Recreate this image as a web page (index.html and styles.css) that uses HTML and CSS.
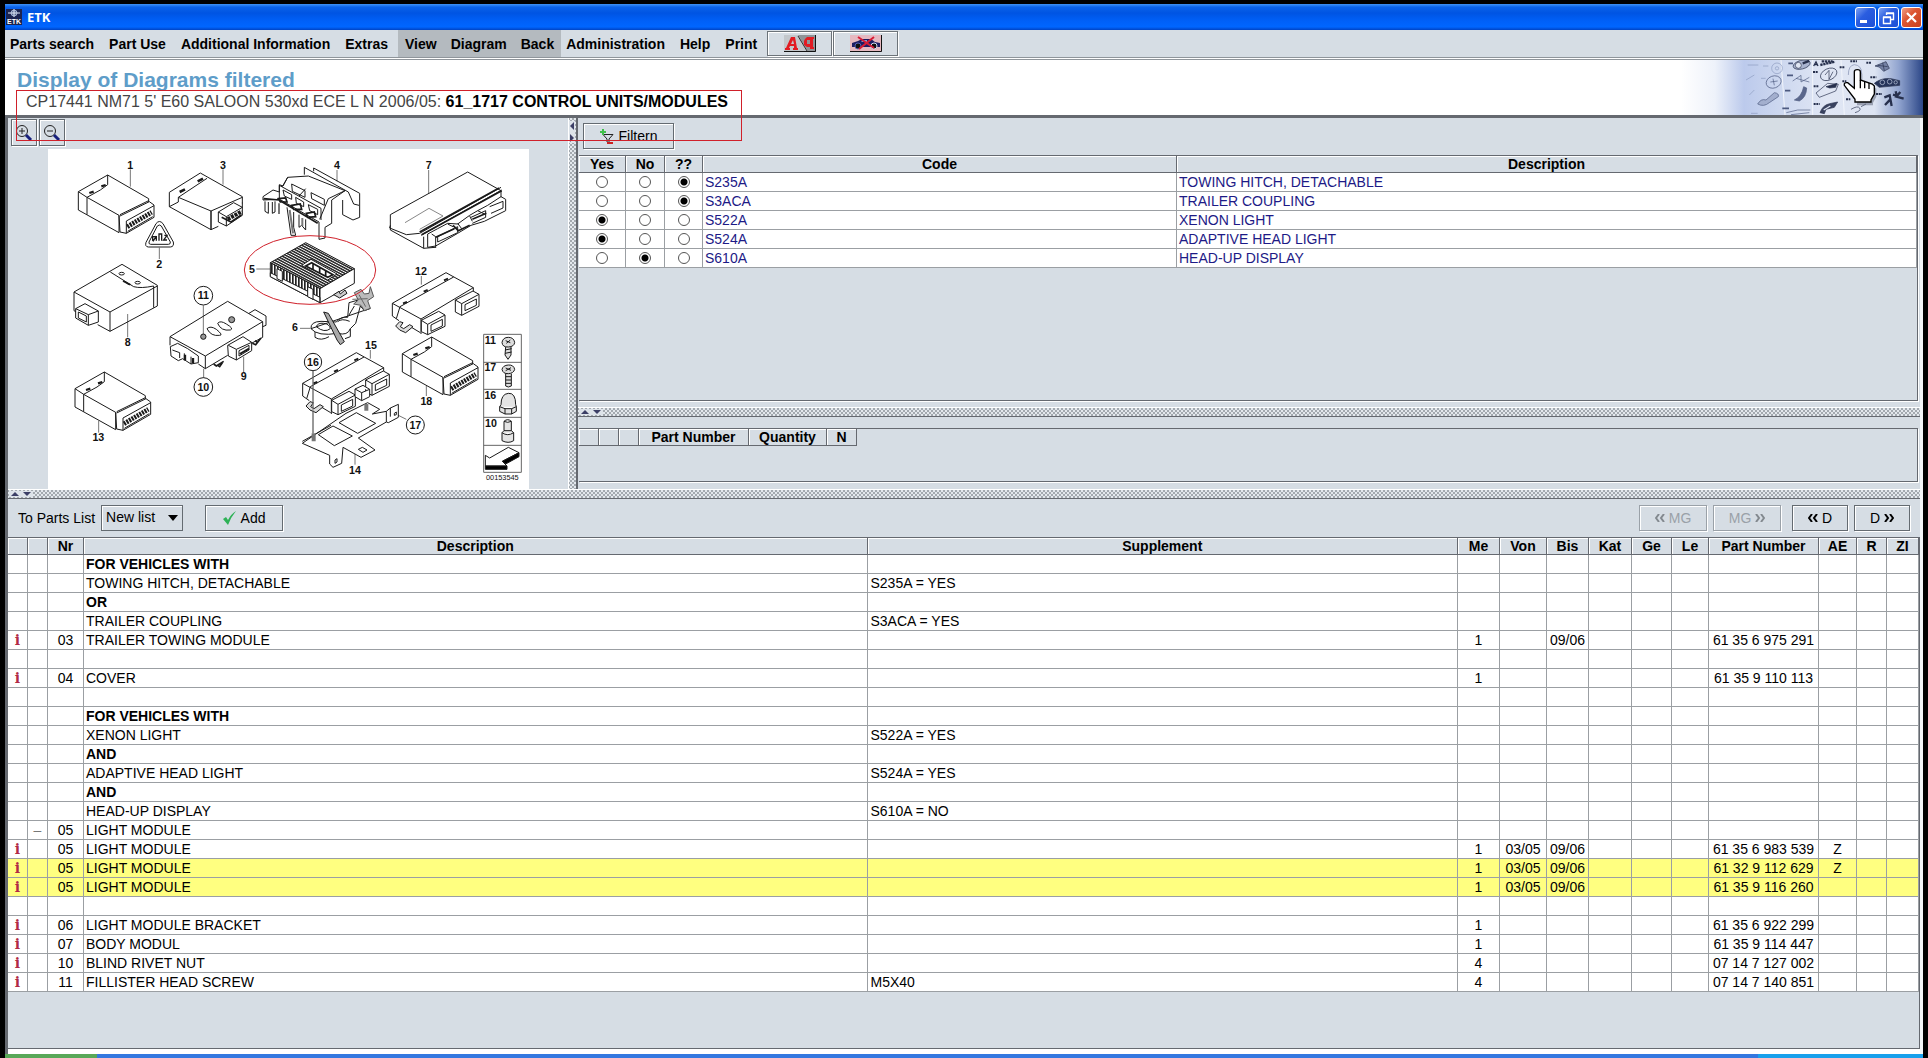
FILE: index.html
```html
<!DOCTYPE html>
<html lang="en">
<head>
<meta charset="utf-8">
<title>ETK</title>
<link rel="stylesheet" href="styles.css">
</head>
<body>
<div class="window">
  <div class="titlebar">
    <svg class="app-icon" width="16" height="16" viewBox="0 0 16 16" aria-hidden="true">
      <rect width="16" height="16" fill="#1c2550"/>
      <circle cx="8" cy="4" r="3" fill="#5c6c92" stroke="#9fb0cf"/>
      <path d="M2 4H14M8 0V8" stroke="#dfe7f5"/>
      <text x="8" y="15" font-size="7" font-weight="bold" text-anchor="middle" fill="#fff">ETK</text>
    </svg>
    <span class="app-name">ETK</span>
    <div class="window-buttons">
      <button type="button" class="wbtn" aria-label="Minimize"><svg width="19" height="19" viewBox="0 0 19 19"><path d="M4 13.5H11" stroke="#fff" stroke-width="3"/></svg></button>
      <button type="button" class="wbtn" aria-label="Restore"><svg width="19" height="19" viewBox="0 0 19 19"><path d="M7.500 7V5.500H14.500V11.500H12M7 5H15M4.500 9.500H11.500V15.500H4.500ZM4 9H12" fill="none" stroke="#fff" stroke-width="1.400"/></svg></button>
      <button type="button" class="wbtn close" aria-label="Close"><svg width="19" height="19" viewBox="0 0 19 19"><path d="M5 5L14 14M14 5L5 14" stroke="#fff" stroke-width="2.200"/></svg></button>
    </div>
  </div>

  <nav class="menubar">
    <button type="button">Parts search</button><button type="button">Part Use</button><button type="button">Additional Information</button><button type="button">Extras</button>
    <div class="menu-group"><button type="button">View</button><button type="button">Diagram</button><button type="button">Back</button></div>
    <button type="button">Administration</button><button type="button">Help</button><button type="button">Print</button>
    <div class="tool-buttons">
      <button type="button" class="tool" aria-label="Letter case"><svg width="32" height="17" viewBox="0 0 32 17"><path d="M0 0H32V17H0Z" fill="#c3c7cb"/><path d="M14 0H32V17H24Z" fill="#8f9498"/><path d="M31.500 0V16.500H0" fill="none" stroke="#111"/><path d="M14 1L23 16" stroke="#333"/><path d="M1 15V13H2L7 2H11L13 13H14V15H9V13H10V11H6L5 13H6V15ZM9 5L7 9H10Z" fill="#e21b22" fill-rule="evenodd"/><path d="M21 4L23 2H30V4H29V12H30V14H26V12H23L20 10V6ZM23 5V9H26V5Z" fill="#e21b22" fill-rule="evenodd"/></svg></button>
      <button type="button" class="tool" aria-label="Vehicle off"><svg width="32" height="17" viewBox="0 0 32 17"><rect width="32" height="17" fill="#e6b9c0"/><path d="M31.500 0V16.500H0" fill="none" stroke="#111"/><path d="M2 8L8 6L12 4H21L25 7L30 8V12H2Z" fill="#1d1d63"/><path d="M13 5H17V7H11Z" fill="#7fa3d8"/><circle cx="8" cy="11" r="3" fill="#111" stroke="#5361b5"/><circle cx="24" cy="11" r="3" fill="#111" stroke="#d5d8ee"/><path d="M8 2L24 13M24 2L9 14" stroke="#d71c35" stroke-width="2"/></svg></button>
    </div>
  </nav>

  <header class="banner">
    <div>
      <h1>Display of Diagrams filtered</h1>
      <p>CP17441 NM71 5' E60 SALOON 530xd ECE L N 2006/05: <b>61_1717 CONTROL UNITS/MODULES</b></p>
    </div>
    <svg class="banner-art" width="242" height="55" viewBox="360 180 726 165" preserveAspectRatio="none" aria-hidden="true">
      <defs><linearGradient id="sky"><stop offset="0" stop-color="#fff"/><stop offset=".14" stop-color="#eef2fa"/><stop offset=".26" stop-color="#bccaec"/><stop offset=".4" stop-color="#ccd7ef"/><stop offset=".6" stop-color="#e0e6f4"/><stop offset=".8" stop-color="#dde4f2"/><stop offset=".9" stop-color="#91a4cf"/><stop offset="1" stop-color="#2b4687"/></linearGradient></defs>
      <rect x="360" y="180" width="726" height="165" fill="url(#sky)"/>
      <path d="M660 180L672 345M755 180V345M840 180L850 345" stroke="#f2f5fb" stroke-width="3"/>
      <g fill="none" stroke="#8d9cc0" stroke-width="2">
        <circle cx="648" cy="205" r="16"/><circle cx="648" cy="205" r="5"/>
        <path d="M560 195H592M565 285L580 270M606 198H622M600 235H614M570 340H590M555 240L580 225"/>
      </g>
      <g fill="none" stroke="#4d5a80" stroke-width="2">
        <ellipse cx="638" cy="246" rx="23" ry="18" transform="rotate(-20 638 246)"/><path d="M628 246L650 243M636 236L640 256"/>
        <path d="M590 312Q600 295 615 300L640 278Q655 280 652 290L625 308Q608 322 590 312Z" fill="#a3afce"/>
        <path d="M695 243L720 226V246L745 232M705 235L745 246M676 338L710 330H748M690 344L745 338"/>
        <path d="M664 325H684M672 272H688M678 226H696M682 190H696" stroke-width="5"/>
        <path d="M700 300Q722 290 728 260L737 264Q736 292 715 303Z" fill="#5a678c"/>
      </g>
      <g fill="none" stroke="#27304d" stroke-width="2">
        <ellipse cx="722" cy="194" rx="26" ry="13" transform="rotate(-14 722 194)" fill="#a9b4d0"/><circle cx="712" cy="196" r="9" fill="#e0e6f3"/><path d="M725 190L745 183" stroke-width="7"/>
        <path d="M758 198L765 186L771 198M762 194H770" stroke-width="4"/><path d="M778 195L822 185M782 184H815" stroke-width="7" stroke-dasharray="7 2"/>
        <ellipse cx="803" cy="223" rx="26" ry="17" transform="rotate(-25 803 223)"/><path d="M792 225L804 211V238L816 215"/>
        <path d="M765 279L800 250L832 253L824 273L775 292Z"/><path d="M795 260L828 250L824 262L806 264Z" fill="#27304d"/>
        <path d="M777 338Q785 315 806 311L830 306L820 322L795 328L790 341Z" fill="#39425f"/><path d="M788 330L808 318" stroke="#dbe2f2" stroke-width="4"/>
        <path d="M756 216H770M758 259H774M758 312H776M836 202H852M928 232H946M916 188H932M945 282H963M855 298H868M868 184H888M844 244H856" stroke-width="6" stroke-dasharray="6 2"/>
        <path d="M862 225Q862 196 880 194Q902 196 902 220" stroke="#7f8bad"/><path d="M870 328Q890 316 896 324T882 338M900 320L915 312"/>
        <path d="M942 198L975 185L985 205L968 214L955 201Z" fill="#7582a5"/><path d="M950 196L980 200M965 188L970 212"/>
        <path d="M940 250Q960 233 990 236L1016 242V256L955 262Z" fill="#26345a"/><circle cx="964" cy="247" r="7" stroke="#c9d1e6"/><circle cx="986" cy="245" r="7" stroke="#c9d1e6"/><circle cx="1004" cy="247" r="5" stroke="#c9d1e6"/>
        <path d="M970 292L986 286L992 318M972 315L988 298M996 284L1010 288M1018 276L1006 290L1028 296M1004 274L1008 290" stroke-width="7"/>
      </g>
      <path d="M880 215Q880 209 889 209T898 215V240L934 252L940 258V282L930 300V308H882V300L848 256Q846 246 858 246L880 263Z" fill="#555b70" opacity=".5" transform="translate(6 8)"/>
      <path d="M880 215Q880 209 889 209T898 215V240L934 252L940 258V282L930 300V306H882V298L850 256Q848 246 860 248L880 265Z" fill="#fff" stroke="#000" stroke-width="4"/>
      <path d="M898 240V265M911 245V265M924 249V267" stroke="#000" stroke-width="4"/>
    </svg>
    <div class="mark-box"></div>
  </header>

  <main class="content">
    <section class="upper">
      <div class="diagram-pane">
        <div class="zoom-bar">
          <button type="button" class="raised zoom" aria-label="Zoom in"><svg width="18" height="18" viewBox="0 0 18 18"><circle cx="7" cy="7" r="5.500" fill="none" stroke="#222"/><path d="M4 7H10M7 4V10" stroke="#222"/><path d="M11 11L16 16" stroke="#17207c" stroke-width="3"/></svg></button>
          <button type="button" class="raised zoom" aria-label="Zoom out"><svg width="18" height="18" viewBox="0 0 18 18"><circle cx="7" cy="7" r="5.500" fill="none" stroke="#222"/><path d="M4 7H10" stroke="#222"/><path d="M11 11L16 16" stroke="#17207c" stroke-width="3"/></svg></button>
        </div>
        <svg class="diagram" width="481" height="340" viewBox="0 0 1443 1020" role="img" aria-label="Control units diagram">
          <rect width="1443" height="1020" fill="#fff"/>
          <defs>
            <pattern id="ribs" width="12" height="8" patternUnits="userSpaceOnUse" patternTransform="skewY(28)"><rect width="12" height="8" fill="#fff"/><rect width="12" height="5" fill="#222"/></pattern>
            <pattern id="fins" width="9" height="12" patternUnits="userSpaceOnUse"><rect width="9" height="12" fill="#fff"/><rect width="5" height="12" fill="#222"/></pattern>
            <g id="unit">
              <path d="M232 245L320 195L443 266V276M232 245V300L354 368V316L258 262L232 245M258 262V314M320 195V224L298 240L258 262M357 314L443 272M354 316L357 366L376 370L459 322V285L445 275L357 318M376 333V370M376 333L459 287"/>
              <path d="M379 350L452 307" stroke-width="14" stroke-dasharray="6 3"/>
              <path d="M380 364L455 320"/>
              <path d="M265 249L278 245M301 229L314 225" stroke-width="7"/>
            </g>
            <g id="wide">
              <path d="M364 490L525 398L607 443V456M364 490L450 537L607 443M364 490V528L384 542M418 560L448 578M450 537V582M387 500L548 411M387 500L376 536"/>
              <path d="M396 490L408 486M458 455L470 450M519 421L531 416" stroke-width="6"/>
              <path d="M451 541L503 514L522 525V559L470 584L451 575ZM451 541L470 553L522 525M470 553V584M480 555L514 538V558L480 574Z" fill="#fff"/>
              <path d="M553 480L606 453L624 463V499L572 526L553 516ZM553 480L572 491L624 463M572 491V526M582 494L616 477V496L582 512Z" fill="#fff"/>
              <path d="M374 558L386 545L396 548L388 560L398 566L416 554L426 560L404 578L386 570Z" fill="#ddd"/>
            </g>
          </defs>
          <g transform="translate(-141 -117)" class="line">
            <use href="#unit"/>
            <use href="#unit" transform="translate(-10 591)"/>
            <path class="lead" d="M388 178V230M666 178V224M475 413V447M380 612V682M607 586V676M608 776V806M728 740V786M293 930V968M766 477H808"/>
            <path d="M505 247L598 189L724 260V280M505 247V290L630 359V303L532 262M505 290L532 276V262L618 205M630 303L724 262M630 303V359L652 349M724 278V316L676 348L652 336M652 306L698 278L724 292L676 320L652 306V336M676 320V348"/>
            <path d="M662 322L690 336L722 314" stroke-width="5"/><path d="M680 328L722 304" stroke-width="12" stroke-dasharray="9 3"/><path d="M536 246L552 238M590 214L606 206" stroke-width="8"/>
            <path d="M465 341Q475 328 486 341L517 396Q520 410 508 411H442Q431 410 435 397ZM469 348Q475 342 481 348L508 396Q509 403 502 403H449Q442 402 444 396Z"/>
            <path d="M455 392V380H466V392M474 392V372H482V392M490 376H498L488 390H498M456 394L466 378" stroke-width="4"/>
            <path d="M219 546L363 463L469 526V588L327 664L290 644M219 546L327 606L469 528M327 606V664M219 546V602L226 606M328 486L398 530Q420 536 458 528V593M376 519L384 524"/>
            <path d="M224 596L252 581L292 603V636L262 646L224 624ZM224 596L262 614L292 603M262 614V646M232 606L256 618V636L232 624Z" fill="#fff"/>
            <ellipse cx="362" cy="491" rx="8" ry="4"/><ellipse cx="410" cy="518" rx="8" ry="4"/><path d="M366 513L388 524" stroke-width="5"/>
            <path d="M744 610L762 599L795 618V646L785 650"/>
            <path d="M507 680L680 574L785 635V682L740 706M507 680L613 738L785 635M613 738V776L592 762M507 680V706M680 736L613 776"/>
            <path d="M508 710L530 700L560 716L592 738V758L570 762L545 746L532 752L510 738ZM514 720L536 728V744M550 730V752M570 740V762" fill="#fff"/>
            <path d="M552 734V750M576 744V760" stroke-width="7"/>
            <path d="M680 706L726 680L752 697V722L706 750L682 738ZM682 706L706 718L752 697M706 718V750M714 722L744 706V720L714 738Z" fill="#fff"/>
            <path d="M716 732L744 716" stroke-width="6"/>
            <path d="M638 762L646 768L668 754M650 766L656 770L664 758M754 700L764 704L780 684M762 692L770 698" stroke-width="5"/>
            <path d="M618 656Q628 646 646 658Q668 676 656 676Q630 680 618 656ZM650 640Q658 630 676 642Q700 656 688 660Q660 664 650 640Z"/>
            <circle cx="607" cy="680" r="8" fill="#999"/><circle cx="692" cy="629" r="9" fill="#999"/>
            <circle cx="607" cy="557" r="28" fill="#fff"/><circle cx="607" cy="831" r="28" fill="#fff"/>
            <g class="num">
              <text x="388" y="176">1</text><text x="666" y="176">3</text><text x="475" y="474">2</text><text x="753" y="488">5</text><text x="380" y="709">8</text><text x="728" y="809">9</text><text x="607" y="568">11</text><text x="607" y="842">10</text><text x="292" y="994">13</text>
            </g>
          </g>
          <g transform="translate(669 -27)" class="line">
            <path class="lead" d="M198 90V124M473 90V162M451 408V434M298 630V656M466 738V768M252 942V974M87 565H118M126 690V880M382 826L406 838"/>
            <!-- bracket 4 -->
            <path d="M128 84L266 160V232L246 240L215 224V180M100 82V104M100 82L232 156L248 192L264 196M128 84V94"/>
            <path d="M50 112L112 108L222 152L182 180V250L162 262V294L144 298V246L26 178L-24 180V170L6 150L25 156V134L36 138Z" fill="#fff"/>
            <path d="M25 136L150 205V240M25 136V176M50 112L34 140M104 146L84 168M222 152L172 176L146 238M62 132L102 152V172L64 154ZM120 158L160 178V196L122 176ZM36 150L62 164V178L40 168ZM74 172L98 186V200L76 190ZM112 194L140 208V224L116 212Z"/>
            <path d="M48 202L60 286H74L68 262V216M84 224V262L92 256L104 270V238M-18 184V214L-8 220V186M4 186V220L12 216V184"/>
            <path d="M22 176L44 174L48 186L28 186ZM62 196L88 192L92 208L68 208ZM106 220L130 216L134 230L110 232ZM-22 176L24 180L140 250" stroke-width="5"/>
            <path d="M56 210L66 280M94 234V258M24 190V222" stroke-width="6" stroke="#777"/>
            <!-- module 5 -->
            <path d="M104 308L250 386L147 446L-2 368Z" fill="url(#ribs)"/>
            <path d="M-2 368L147 446V488L-2 410Z" fill="url(#fins)"/>
            <path d="M147 446L250 386V430L147 488ZM-2 398V410L147 488V472Z" fill="#fff"/>
            <path d="M92 376L120 358L198 402L170 420Z" fill="#fff"/><path d="M104 378L122 368L186 404L170 412ZM126 370V388M146 380V400M164 392V410" stroke-width="5"/>
            <path d="M18 386L34 394V424L18 416ZM110 440L126 448V478L110 470Z" fill="#fff"/>
            <path d="M188 464L204 454L208 462L222 450L228 460L206 474Z" fill="#ccc"/>
            <!-- holder 6 -->
            <path d="M120 566Q118 545 150 544L196 546Q210 528 230 532L234 488L262 480M298 505L280 512L268 498L254 550L238 566Q230 588 200 580Q140 590 120 566ZM132 576V592Q150 604 174 590M238 566V590L222 596M136 560Q140 548 158 550T178 566Q160 580 136 560M200 545Q212 534 236 544M234 525L250 498"/>
            <path d="M158 516L172 520L220 605L208 614L198 600Z" fill="#aaa"/>
            <path d="M250 458L270 448L280 462L294 460L298 440L308 470L290 482L298 505L280 512L270 496L248 492L262 480Z" fill="#bbb" stroke="#555"/><path d="M264 464L284 500M244 478L290 476" stroke="#666"/>
            <!-- module 7 -->
            <path d="M358 224L590 96L690 152V172M358 224V270L458 325L492 322M358 256L356 264L406 284L446 280M446 280L690 142M450 286L692 150M458 290V325"/><path d="M402 248L474 205L516 228L446 268" stroke="#888"/>
            <path d="M446 276L684 144M452 284L692 152" stroke-width="5"/>
            <path d="M470 282L500 266L530 250L560 252L596 226L620 212L650 196L690 170L704 178V212L640 244L600 256L560 280L494 318L470 322Z" fill="#fff"/>
            <path d="M482 282L494 290V324M500 290L560 260V278L500 306ZM600 232L644 212V232L604 250M656 200L696 184V204L660 220M530 252L546 260M560 250L572 266M596 228L604 244M620 212L640 222"/>
            <path d="M494 292L550 266M546 256L562 272L596 256M604 238L646 220" stroke-width="5"/>
            <use href="#wide"/>
            <use href="#unit" transform="translate(162 396)"/>
            <!-- mounting plate 14 -->
            <path d="M94 904L180 856M225 820L290 788L326 808L304 822L346 814L358 804L382 793V832L352 848L346 846L262 894L312 930L270 952L216 922L212 970L186 982L176 972V946L94 910ZM346 814V846M358 804V830"/>
            <path d="M142 884L186 858L244 888L190 917ZM204 848L256 818L314 850L260 880ZM262 928L274 922L288 930L276 937ZM192 960L198 956V966L192 970ZM370 820L376 816V824L370 826Z"/>
            <path d="M128 880V904M286 792V812" stroke-width="12" stroke="#777"/>
            <use href="#wide" transform="translate(-269 240)"/>
            <path d="M252 747L276 736L296 748V770L272 782L252 770ZM252 747L272 758L296 748M272 758V782" fill="#fff"/>
            <!-- hardware column -->
            <path stroke="#666" d="M638 583H751V997H638ZM638 667H751M638 748H751M638 832H751M638 916H751"/>
            <path d="M693 607Q696 592 712 592T731 607Q730 620 712 621T693 607ZM704 621L702 645L711 658L720 645V621M702 630L722 626M702 640L722 636M704 602L718 608M718 600L706 610" fill="#ddd"/>
            <path d="M693 688Q696 676 712 675T731 688Q728 700 712 701T693 688ZM704 701V738L712 741L721 738V701M704 710H720M704 720H720M704 730H720M704 684L720 691M720 683L704 692" fill="#ddd"/>
            <path d="M690 794Q690 762 712 760T734 794L736 800V814L722 822H702L686 814V800ZM686 800L702 806H722L736 800M702 806V822M722 806V822" fill="#e4e4e4"/>
            <path d="M699 844Q710 834 721 844V872L728 878V902Q712 912 693 902V878L699 872ZM699 844Q710 850 721 844M693 878Q710 890 728 878M699 872H721" fill="#e4e4e4"/>
            <path d="M643 946L656 954L712 922L744 938L694 964L708 978H643Z" fill="#fff"/><path d="M643 978H708V988H643ZM694 964L744 938V950L704 972Z" fill="#000"/>
            <circle cx="126" cy="666" r="26" fill="#fff"/><circle cx="433" cy="855" r="27" fill="#fff"/>
            <path class="lead" d="M126 692V880"/>
            <g class="num">
              <text x="198" y="87">4</text><text x="473" y="87">7</text><text x="450" y="404">12</text><text x="72" y="574">6</text><text x="300" y="627">15</text><text x="126" y="677">16</text><text x="466" y="796">18</text><text x="433" y="867">17</text><text x="252" y="1002">14</text>
              <text x="658" y="612">11</text><text x="658" y="693">17</text><text x="658" y="777">16</text><text x="660" y="861">10</text>
            </g>
            <text class="code" x="694" y="1019">00153545</text>
            <ellipse class="mark" cx="117" cy="390" rx="197" ry="103"/>
          </g>
        </svg>
      </div>

      <div class="splitter vertical"><svg width="6" height="22" viewBox="0 0 6 22" aria-hidden="true"><path d="M5 1V9L1 5ZM1 13V21L5 17Z" fill="#3c3f66"/></svg></div>

      <div class="filter-pane">
        <div class="filter-top">
          <button type="button" class="raised filter"><svg width="14" height="15" viewBox="0 0 14 15" aria-hidden="true"><path d="M3 5.500H13L9 10V14L7 13V10Z" fill="none" stroke="#222"/><path d="M3 0V6M0 3H6" stroke="#3fc04a" stroke-width="2"/><path d="M7 14H13" stroke="#c22" stroke-width="2"/></svg>Filtern</button>
          <div class="scroll-box">
            <table class="grid codes">
              <colgroup><col class="w47"><col class="w39"><col class="w38"><col class="w474"><col></colgroup>
              <thead><tr><th>Yes<th>No<th>??<th>Code<th>Description</tr></thead>
              <tbody>
                <tr><td><input type="radio" name="s235a" aria-label="S235A yes"><td><input type="radio" name="s235a" aria-label="S235A no"><td><input type="radio" name="s235a" aria-label="S235A unknown" checked><td>S235A<td>TOWING HITCH, DETACHABLE</tr>
                <tr><td><input type="radio" name="s3aca" aria-label="S3ACA yes"><td><input type="radio" name="s3aca" aria-label="S3ACA no"><td><input type="radio" name="s3aca" aria-label="S3ACA unknown" checked><td>S3ACA<td>TRAILER COUPLING</tr>
                <tr><td><input type="radio" name="s522a" aria-label="S522A yes" checked><td><input type="radio" name="s522a" aria-label="S522A no"><td><input type="radio" name="s522a" aria-label="S522A unknown"><td>S522A<td>XENON LIGHT</tr>
                <tr><td><input type="radio" name="s524a" aria-label="S524A yes" checked><td><input type="radio" name="s524a" aria-label="S524A no"><td><input type="radio" name="s524a" aria-label="S524A unknown"><td>S524A<td>ADAPTIVE HEAD LIGHT</tr>
                <tr><td><input type="radio" name="s610a" aria-label="S610A yes"><td><input type="radio" name="s610a" aria-label="S610A no" checked><td><input type="radio" name="s610a" aria-label="S610A unknown"><td>S610A<td>HEAD-UP DISPLAY</tr>
              </tbody>
            </table>
          </div>
        </div>
        <div class="splitter"><svg width="22" height="6" viewBox="0 0 22 6" aria-hidden="true"><path d="M1 5H9L5 1ZM13 1H21L17 5Z" fill="#3c3f66"/></svg></div>
        <div class="parts-small">
          <div class="scroll-box">
            <table class="grid small-table">
              <colgroup><col class="w20"><col class="w20"><col class="w20"><col class="w110"><col class="w78"><col class="w30"></colgroup>
              <thead><tr><th><th><th><th>Part Number<th>Quantity<th>N</tr></thead>
            </table>
          </div>
        </div>
      </div>
    </section>

    <div class="splitter"><svg width="22" height="6" viewBox="0 0 22 6" aria-hidden="true"><path d="M1 5H9L5 1ZM13 1H21L17 5Z" fill="#3c3f66"/></svg></div>

    <section class="lower">
      <div class="list-bar">
        <label for="list">To Parts List</label>
        <div class="select-wrap"><select id="list"><option>New list</option></select><svg width="10" height="6" viewBox="0 0 10 6" aria-hidden="true"><path d="M0 0H10L5 6Z"/></svg></div>
        <button type="button" class="raised add"><svg width="14" height="14" viewBox="0 0 14 14" aria-hidden="true"><path d="M0 8L3 6L5 9Q8 3 13 0Q8 6 5 14Z" fill="#2fb257"/></svg>Add</button>
        <div class="pager">
          <button type="button" class="raised page group" disabled><svg width="10" height="8" viewBox="0 0 10 8" aria-hidden="true"><path d="M4 0L1 4L4 8M9 0L6 4L9 8"/></svg>MG</button>
          <button type="button" class="raised page group" disabled>MG<svg width="10" height="8" viewBox="0 0 10 8" aria-hidden="true"><path d="M1 0L4 4L1 8M6 0L9 4L6 8"/></svg></button>
          <button type="button" class="raised page first-d"><svg width="10" height="8" viewBox="0 0 10 8" aria-hidden="true"><path d="M4 0L1 4L4 8M9 0L6 4L9 8"/></svg>D</button>
          <button type="button" class="raised page">D<svg width="10" height="8" viewBox="0 0 10 8" aria-hidden="true"><path d="M1 0L4 4L1 8M6 0L9 4L6 8"/></svg></button>
        </div>
      </div>
      <div class="parts-area">
        <table class="grid parts">
          <colgroup><col class="w20"><col class="w20"><col class="w36"><col class="desc"><col><col class="w42"><col class="w47"><col class="w42"><col class="w43"><col class="w40"><col class="w37"><col class="w110"><col class="w38"><col class="w30"><col class="w32"></colgroup>
          <thead><tr><th><th><th>Nr<th>Description<th>Supplement<th>Me<th>Von<th>Bis<th>Kat<th>Ge<th>Le<th>Part Number<th>AE<th>R<th>ZI</tr></thead>
          <tbody>
            <tr><td><td><td><td><b>FOR VEHICLES WITH</b><td><td><td><td><td><td><td><td><td><td><td></tr>
            <tr><td><td><td><td>TOWING HITCH, DETACHABLE<td>S235A = YES<td><td><td><td><td><td><td><td><td><td></tr>
            <tr><td><td><td><td><b>OR</b><td><td><td><td><td><td><td><td><td><td><td></tr>
            <tr><td><td><td><td>TRAILER COUPLING<td>S3ACA = YES<td><td><td><td><td><td><td><td><td><td></tr>
            <tr><td><i>i</i><td><td>03<td>TRAILER TOWING MODULE<td><td>1<td><td>09/06<td><td><td><td>61 35 6 975 291<td><td><td></tr>
            <tr><td><td><td><td><td><td><td><td><td><td><td><td><td><td><td></tr>
            <tr><td><i>i</i><td><td>04<td>COVER<td><td>1<td><td><td><td><td><td>61 35 9 110 113<td><td><td></tr>
            <tr><td><td><td><td><td><td><td><td><td><td><td><td><td><td><td></tr>
            <tr><td><td><td><td><b>FOR VEHICLES WITH</b><td><td><td><td><td><td><td><td><td><td><td></tr>
            <tr><td><td><td><td>XENON LIGHT<td>S522A = YES<td><td><td><td><td><td><td><td><td><td></tr>
            <tr><td><td><td><td><b>AND</b><td><td><td><td><td><td><td><td><td><td><td></tr>
            <tr><td><td><td><td>ADAPTIVE HEAD LIGHT<td>S524A = YES<td><td><td><td><td><td><td><td><td><td></tr>
            <tr><td><td><td><td><b>AND</b><td><td><td><td><td><td><td><td><td><td><td></tr>
            <tr><td><td><td><td>HEAD-UP DISPLAY<td>S610A = NO<td><td><td><td><td><td><td><td><td><td></tr>
            <tr><td><td class="fold">–<td>05<td>LIGHT MODULE<td><td><td><td><td><td><td><td><td><td><td></tr>
            <tr><td><i>i</i><td><td>05<td>LIGHT MODULE<td><td>1<td>03/05<td>09/06<td><td><td><td>61 35 6 983 539<td>Z<td><td></tr>
            <tr class="hit"><td><i>i</i><td><td>05<td>LIGHT MODULE<td><td>1<td>03/05<td>09/06<td><td><td><td>61 32 9 112 629<td>Z<td><td></tr>
            <tr class="hit"><td><i>i</i><td><td>05<td>LIGHT MODULE<td><td>1<td>03/05<td>09/06<td><td><td><td>61 35 9 116 260<td><td><td></tr>
            <tr><td><td><td><td><td><td><td><td><td><td><td><td><td><td><td></tr>
            <tr><td><i>i</i><td><td>06<td>LIGHT MODULE BRACKET<td><td>1<td><td><td><td><td><td>61 35 6 922 299<td><td><td></tr>
            <tr><td><i>i</i><td><td>07<td>BODY MODUL<td><td>1<td><td><td><td><td><td>61 35 9 114 447<td><td><td></tr>
            <tr><td><i>i</i><td><td>10<td>BLIND RIVET NUT<td><td>4<td><td><td><td><td><td>07 14 7 127 002<td><td><td></tr>
            <tr><td><i>i</i><td><td>11<td>FILLISTER HEAD SCREW<td>M5X40<td>4<td><td><td><td><td><td>07 14 7 140 851<td><td><td></tr>
          </tbody>
        </table>
      </div>
    </section>
  </main>
</div>
<div class="taskbar"><span class="start"></span><span class="tray"></span></div>
</body>
</html>
```
FILE: styles.css
```css
* { box-sizing: border-box; }
body {
  margin: 0;
  min-height: 100vh;
  padding: 4px 5px 0;
  display: flex;
  flex-direction: column;
  background: #000;
  color: #000;
  font: 14px/18px "Liberation Sans", Arial, sans-serif;
}
button, select { font: inherit; color: inherit; margin: 0; padding: 0; border: 0; background: none; border-radius: 0; }
svg { display: block; flex: none; }

.window { flex: 1; display: flex; flex-direction: column; background: #d6dde4; }

.titlebar {
  height: 26px;
  display: flex;
  align-items: center;
  padding: 0 1px;
  background: linear-gradient(#3f92f5 0, #0a62e8 12%, #0054e3 35%, #0060f8 65%, #0066ff 88%, #0043c4 100%);
}
.app-name { margin-left: 5px; color: #fff; font: bold 13px/18px "Open Sans", sans-serif; }
.window-buttons { margin-left: auto; display: flex; gap: 2px; }
.wbtn { width: 21px; height: 21px; border: 1px solid #fff; border-radius: 3px; background: linear-gradient(135deg, #7da2f2, #2a5de0 40%, #1d50d6); }
.wbtn.close { background: linear-gradient(135deg, #f0a088, #dd5733 40%, #c8401c); }

.menubar { height: 30px; display: flex; align-items: stretch; padding-bottom: 3px; font-weight: bold; background: linear-gradient(#8f959b, #8f959b) 0 27px / 100% 1px no-repeat, linear-gradient(#fff, #fff) 0 28px / 100% 1px no-repeat, linear-gradient(#8f959b, #8f959b) 0 29px / 100% 1px no-repeat; }
.menubar > button { padding: 0 10px 0 5px; white-space: nowrap; }
.menu-group { display: flex; background: #b4babf; }
.menu-group button { padding: 0 7px; }
.tool-buttons { display: flex; gap: 1px; padding: 1px 0; }
.tool { width: 65px; display: flex; align-items: center; justify-content: center; border: 1px solid #6c7379; box-shadow: inset 1px 1px #fff, 1px 1px #fff; }

.banner { position: relative; height: 55px; display: flex; justify-content: space-between; background: #fff; }
h1 { margin: 7px 0 0 12px; font-size: 21px; line-height: 25px; color: #5e9dc9; }
.banner p { margin: 0 0 0 21px; font-size: 16px; line-height: 20px; white-space: nowrap; color: #444; }
.banner b { color: #000; }
.mark-box { position: absolute; left: 11px; top: 30px; width: 726px; height: 51px; border: 1px solid #d0202a; pointer-events: none; z-index: 1; }

.content { flex: 1; display: flex; flex-direction: column; border-top: 3px solid #656970; border-left: 3px solid #656970; padding-right: 3px; background: linear-gradient(#f3f6f8, #f3f6f8) right / 3px 100% no-repeat; }
.upper { display: grid; grid-template-columns: 560fr 8px 1344fr; }
.diagram-pane { display: flex; flex-direction: column; }
.zoom-bar { display: flex; gap: 2px; padding: 1px 3px 3px; }
.raised { display: flex; align-items: center; justify-content: center; height: 26px; border: 1px solid #646b71; background: #d6dde4; box-shadow: inset 1px 1px #fff, 1px 1px #fff; }
.zoom { width: 26px; height: 27px; }
.diagram { align-self: center; max-width: 100%; }
.line { fill: none; stroke: #1a1a1a; stroke-width: 3; }
.lead { stroke: #777; }
.num { fill: #111; stroke: none; font-weight: bold; font-size: 32px; text-anchor: middle; }
.code { fill: #111; stroke: none; font-size: 22px; text-anchor: middle; }
.mark { stroke: #d0202a; }

.splitter {
  height: 10px;
  display: flex;
  align-items: center;
  padding: 0 1px;
  border-top: 1px solid #fff;
  border-bottom: 1px solid #656970;
  background: radial-gradient(#a3a9af 1px, transparent 1px) 0 1px / 4px 4px, radial-gradient(#a3a9af 1px, transparent 1px) 2px 3px / 4px 4px, #e3e8ed;
}
.splitter svg { background: #dde3e9; width: 24px; }
.splitter.vertical { height: auto; align-items: flex-start; border: 0; border-left: 1px solid #fff; padding: 3px 0; }
.splitter.vertical svg { width: 6px; }

.filter-pane { display: flex; flex-direction: column; border-left: 2px solid #656970; }
.filter-top { flex: 1; display: flex; flex-direction: column; padding: 5px 2px 6px 1px; }
.filter { width: 91px; margin: 0 0 6px 4px; gap: 5px; }
.scroll-box { flex: 1; border: 1px solid #656970; border-left: 0; box-shadow: 1px 1px #fff; }
.parts-small { display: flex; height: 72px; padding: 11px 2px 7px 1px; }

.grid { border-collapse: separate; border-spacing: 0; table-layout: fixed; width: 100%; }
.grid th { height: 17px; padding: 0; line-height: 16px; border-right: 1px solid #656970; border-bottom: 1px solid #656970; box-shadow: inset 1px 1px #fff; background: #d6dde4; }
.grid td { height: 19px; padding: 0 2px; line-height: 18px; border-right: 1px solid #9b9fa3; border-bottom: 1px solid #9b9fa3; background: #fff; white-space: nowrap; overflow: hidden; }
.codes td { color: #1d1a86; }
.codes td:nth-child(-n+3) { text-align: center; }
.codes input { appearance: none; display: block; width: 12px; height: 12px; margin: 0 auto; border: 1px solid #555; border-radius: 50%; background: #fff; }
.codes input:checked { background: radial-gradient(circle, #000 3px, #fff 4px); }
.small-table { width: 278px; }

.lower { flex: 1; display: flex; flex-direction: column; padding-bottom: 5px; background: linear-gradient(#fff, #fff) bottom / 100% 5px no-repeat; }
.list-bar { display: flex; align-items: center; padding: 6px 10px 6px 10px; height: 38px; }
.select-wrap { position: relative; margin: 0 22px 0 6px; }
.select-wrap select { appearance: none; width: 82px; height: 26px; padding: 0 4px 2px; border: 1px solid #646b71; box-shadow: inset 1px 1px #fff; }
.select-wrap svg { position: absolute; right: 5px; top: 10px; pointer-events: none; }
.add { width: 78px; gap: 4px; }
.pager { margin-left: auto; display: flex; gap: 6px; }
.page { width: 56px; gap: 4px; }
.page svg { fill: none; stroke: #000; stroke-width: 2; }
.page.group { width: 68px; border-color: #9aa1a8; color: #9aa1a8; }
.page.group svg { stroke: #83898f; }
.first-d { margin-left: 5px; }
.parts-area { flex: 1; border-top: 1px solid #656970; border-right: 1px solid #656970; border-bottom: 1px solid #656970; }
.parts td:not(:nth-child(4)):not(:nth-child(5)) { text-align: center; }
.parts td:nth-child(5) { padding-left: 3px; }
.parts td:nth-child(-n+2) { padding: 0; }
.parts i { font: bold 14px/17px "DejaVu Serif", serif; color: #b02a45; }
.parts .fold { color: #777; }
.parts .hit td { background: #ffff80; }
.desc { width: 41%; }
.w20 { width: 20px; }
.w30 { width: 30px; }
.w32 { width: 32px; }
.w36 { width: 36px; }
.w37 { width: 37px; }
.w38 { width: 38px; }
.w39 { width: 39px; }
.w40 { width: 40px; }
.w42 { width: 42px; }
.w43 { width: 43px; }
.w47 { width: 47px; }
.w78 { width: 78px; }
.w110 { width: 110px; }
.w474 { width: 474px; }

.taskbar { height: 4px; display: flex; justify-content: space-between; background: #3478e0; }
.start { width: 92px; background: #58a858; }
.tray { width: 165px; background: #18a0ec; }
```
